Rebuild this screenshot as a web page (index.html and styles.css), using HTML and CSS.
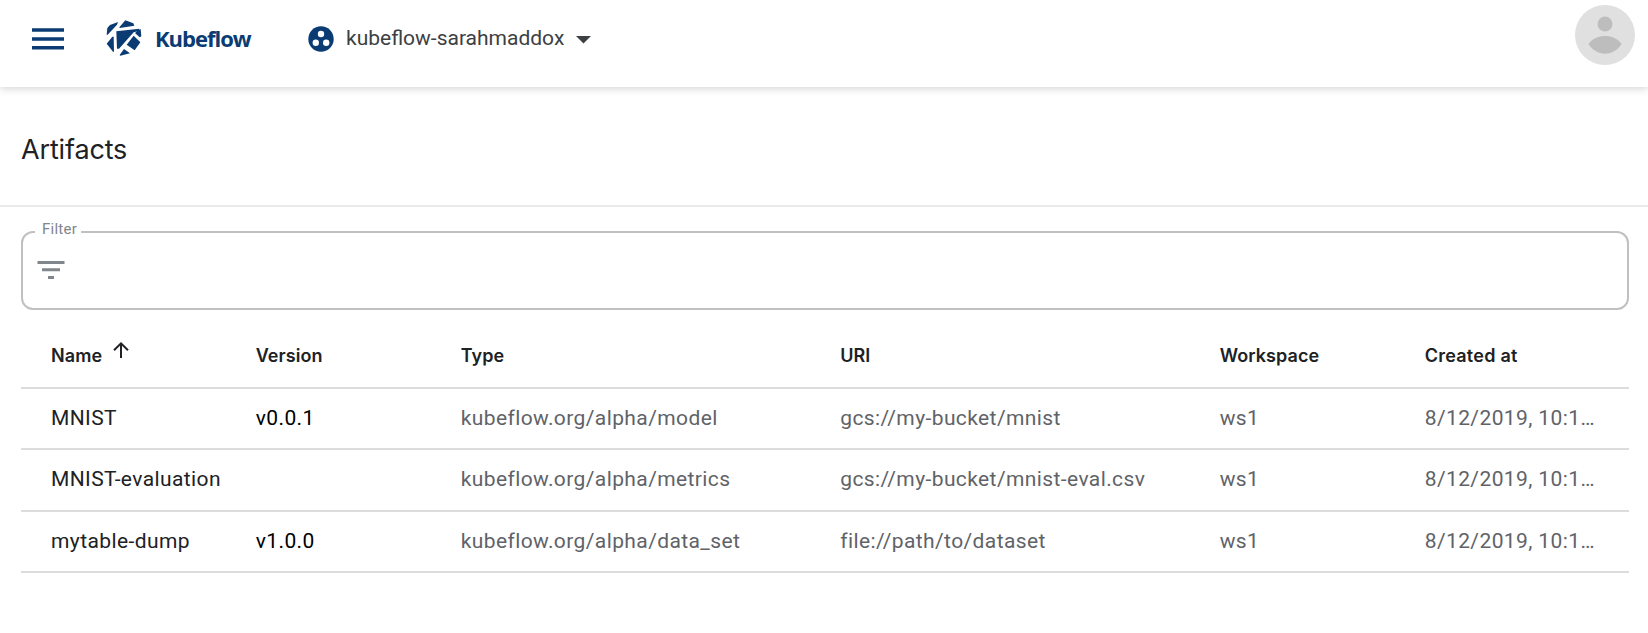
FILE: index.html
```html
<!DOCTYPE html>
<html lang="en">
<head>
<meta charset="utf-8">
<title>Kubeflow Artifacts</title>
<link rel="stylesheet" href="styles.css">
</head>
<body>
<header class="topbar">
  <svg class="menu" width="32" height="22" viewBox="0 0 32 22"><path d="M0 .3h32v3.5H0zM0 9.3h32v3.5H0zM0 18h32v3.5H0z"/></svg>
  <svg class="logo" width="36" height="36" viewBox="318 60 106 108"><path d="M321 84L329 75 353 66 350 74 322 104 319 104ZM375 61L399 70 402 77 358 84 357 82ZM348 94L417 86 414 93 400 97 356 146 350 146ZM416 89L421 87 423 109 418 112 404 99ZM336 110L340 110 341 155 338 155 319 131ZM400 107L420 127 403 151 379 134ZM371 147L389 160 360 167 358 165Z"/></svg>
  <span class="brand">Kubeflow</span>
  <svg class="ns-icon" width="26" height="26" viewBox="0 0 26 26"><circle cx="13" cy="13" r="12.7"/><g class="dots"><circle cx="13" cy="8" r="3.2"/><circle cx="7.8" cy="16.8" r="3.2"/><circle cx="18.2" cy="16.8" r="3.2"/></g></svg>
  <span class="namespace">kubeflow-sarahmaddox</span>
  <svg class="caret" width="15" height="8" viewBox="0 0 15 8"><path d="M0 0h15L7.5 7.5z"/></svg>
  <svg class="avatar" width="60" height="60" viewBox="0 0 60 60"><circle class="disc" cx="30" cy="30" r="30"/><circle cx="30" cy="19" r="7.5"/><path d="M13.5 39C17 33.500 24 31 30 31S43 33.500 46.500 39C43 45 36.500 48.700 30 48.700S17 45 13.500 39Z"/></svg>
</header>
<main>
  <h1 class="title">Artifacts</h1>
  <fieldset class="filter">
    <legend>Filter</legend>
    <svg width="28" height="18" viewBox="0 0 28 18"><path d="M.5 0h27v3H.5zM5 7.300h18v3H5zM11 15h6v3h-6z"/></svg>
  </fieldset>
  <section class="table">
    <div class="row head"><span>Name<svg class="sort" width="16" height="16" viewBox="0 0 16 16"><path d="M8 16V1.500M1 8.200L8 1.400 15 8.200"/></svg></span><span>Version</span><span>Type</span><span>URI</span><span>Workspace</span><span class="date">Created at</span></div>
    <div class="row"><span class="name">MNIST</span><span class="version">v0.0.1</span><span>kubeflow.org/alpha/model</span><span>gcs://my-bucket/mnist</span><span>ws1</span><span>8/12/2019, 10:1…</span></div>
    <div class="row tall"><span class="name">MNIST-evaluation</span><span></span><span>kubeflow.org/alpha/metrics</span><span>gcs://my-bucket/mnist-eval.csv</span><span>ws1</span><span>8/12/2019, 10:1…</span></div>
    <div class="row"><span class="name">mytable-dump</span><span class="version">v1.0.0</span><span>kubeflow.org/alpha/data_set</span><span>file://path/to/dataset</span><span>ws1</span><span>8/12/2019, 10:1…</span></div>
  </section>
</main>
</body>
</html>
```
FILE: styles.css
```css
* { box-sizing: border-box; }
body { margin: 0; background: #fff; font-family: Roboto, sans-serif; overflow: hidden; }
svg { display: block; flex: none; }
.topbar { height: 87px; display: flex; align-items: flex-start; padding-left: 32px; padding-right: 13px; box-shadow: 0 1px 8px rgba(60, 60, 80, .25); }
.menu { margin-top: 28px; fill: #0a3b72; }
.logo { margin: 20px 0 0 42px; fill: #0a3b72; }
.brand { margin: 23px 0 0 13px; width: 153px; font: 700 22px/30px "Open Sans", sans-serif; letter-spacing: -1px; color: #0a3b72; white-space: nowrap; }
.ns-icon { margin-top: 26px; fill: #0a3b72; }
.dots { fill: #fff; }
.namespace { margin: 25px 0 0 12px; width: 230px; font-size: 21px; line-height: 26px; color: #3c4043; white-space: nowrap; }
.caret { margin-top: 36px; fill: #3c4043; }
.avatar { margin: 5px 0 0 auto; fill: #bdbdbd; }
.disc { fill: #e0e0e0; }
.title { margin: 0; height: 120px; padding: 45px 0 0 21px; border-bottom: 2px solid #ebebeb; font: 400 27px/36px Inter, sans-serif; letter-spacing: -.15px; color: #202124; }
.filter { height: 89px; margin: 14px 19px 0 21px; padding: 0 0 0 14px; border: 2px solid #c0c0c0; border-radius: 12px; }
.filter legend { height: 22px; padding: 0 4px 0 7px; margin-left: -2px; font-size: 15px; line-height: 16px; letter-spacing: .25px; color: #80868b; }
.filter svg { margin-top: 18px; fill: #80868b; }
.table { margin: 0 19px 0 21px; }
.row { display: grid; grid-template-columns: 204.7px 205px 379.5px 379.5px 205px 1fr; height: 61px; padding-left: 30px; border-bottom: 2px solid #dcdcdc; font-size: 21px; line-height: 59px; letter-spacing: .4px; color: #5f6368; white-space: nowrap; }
.tall { height: 62px; }
.head { height: 79px; font: 600 18px/92px Inter, sans-serif; letter-spacing: .08px; color: #202124; }
.head .date { letter-spacing: .25px; }
.head span { display: flex; }
.sort { margin: 32px 0 0 11px; fill: none; stroke: #202124; stroke-width: 2; }
.name { color: #202124; }
.version { color: #000; }
```
